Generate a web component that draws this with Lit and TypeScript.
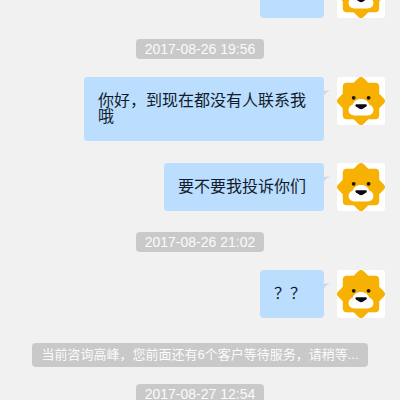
import { LitElement, html, css } from "lit";
import { customElement, property } from "lit/decorators.js";

type Entry = { kind: "message" | "time" | "notice"; text: string };

const entries: Entry[] = [
  { kind: "message", text: "" },
  { kind: "time", text: "2017-08-26 19:56" },
  { kind: "message", text: "你好，到现在都没有人联系我哦" },
  { kind: "message", text: "要不要我投诉你们" },
  { kind: "time", text: "2017-08-26 21:02" },
  { kind: "message", text: "？？" },
  { kind: "notice", text: "当前咨询高峰，您前面还有6个客户等待服务，请稍等..." },
  { kind: "time", text: "2017-08-27 12:54" },
];

@customElement("lion-avatar")
export class LionAvatar extends LitElement {
  static styles = css`
    :host {
      display: block;
      flex: none;
      width: 48px;
      height: 48px;
      border-radius: 3px;
      background: #fff;
      overflow: hidden;
    }
    .face {
      display: block;
    }
  `;

  render() {
    return html`
      <svg class="face" viewBox="0 0 48 48" width="48" height="48" aria-hidden="true">
        <g fill="#f7b103" stroke="#f7b103" stroke-width="8" stroke-linejoin="round">
          <path d="M9.8 9.8H38.2V38.2H9.8Z" />
          <path d="M24 4.2 43.8 24 24 43.8 4.2 24Z" />
        </g>
        <path
          fill="#fff"
          d="M24 22C28.4 22 31.2 24.4 32.4 27.8C35 28.6 36.4 30.6 36.4 33C36.4 36.4 34 38.4 30.6 38.4H17.4C14 38.4 11.6 36.4 11.6 33C11.6 30.6 13 28.6 15.6 27.8C16.8 24.4 19.6 22 24 22Z"
        />
        <path fill="#0b0a12" d="M19.4 27.2H28.8C30 27.2 30.2 28.4 29.4 29.2L26.2 31.6C24.8 32.6 23.4 32.6 22 31.6L18.8 29.2C18 28.4 18.2 27.2 19.4 27.2Z" />
        <circle cx="16.7" cy="20.8" r="1.9" fill="#1c1608" />
        <circle cx="31.6" cy="20.8" r="1.9" fill="#1c1608" />
      </svg>
    `;
  }
}

@customElement("chat-message")
export class ChatMessage extends LitElement {
  @property() text = "";

  static styles = css`
    :host {
      display: flex;
      justify-content: flex-end;
      align-items: flex-start;
      gap: 13px;
      padding: 0 15px 0 84px;
      margin-bottom: 22px;
    }
    .bubble {
      position: relative;
      box-sizing: border-box;
      min-width: 64px;
      min-height: 48px;
      padding: 16px 18px 16px 14px;
      border-radius: 4px;
      background: #bbddfe;
      color: #101c2c;
      font-size: 16px;
      line-height: 16px;
    }
    .tail {
      position: absolute;
      left: 100%;
      top: 13px;
      display: block;
    }
  `;

  render() {
    return html`
      <div class="bubble">
        ${this.text}
        <svg class="tail" viewBox="0 0 8 6" width="8" height="6" aria-hidden="true">
          <path fill="#c3d9ee" d="M0 1C2 1 5 0 7 0C4 1 1.6 2.6 0 5.5Z" />
        </svg>
      </div>
      <lion-avatar></lion-avatar>
    `;
  }
}

@customElement("app-root")
export class AppRoot extends LitElement {
  static styles = css`
    :host {
      display: block;
      height: 100vh;
      overflow: hidden;
      background: #f1f1f1;
      font-family: "Liberation Sans", "Noto Sans CJK SC", sans-serif;
    }
    .feed {
      display: flex;
      flex-direction: column;
      margin-top: -30px;
    }
    .pill {
      align-self: center;
      box-sizing: border-box;
      border-radius: 4px;
      background: #c9c9c9;
      color: #fbfbfb;
    }
    .time {
      padding: 0 9px;
      margin: -1px 0 18px;
      font-size: 14px;
      line-height: 20px;
      white-space: nowrap;
    }
    .notice {
      padding: 0 9px;
      margin: 3px 0 18px;
      font-size: 13px;
      line-height: 24px;
    }
  `;

  render() {
    return html`
      <main class="feed">
        ${entries.map((entry) =>
          entry.kind === "message"
            ? html`<chat-message .text=${entry.text}></chat-message>`
            : html`<div class="pill ${entry.kind}">${entry.text}</div>`
        )}
      </main>
    `;
  }
}
